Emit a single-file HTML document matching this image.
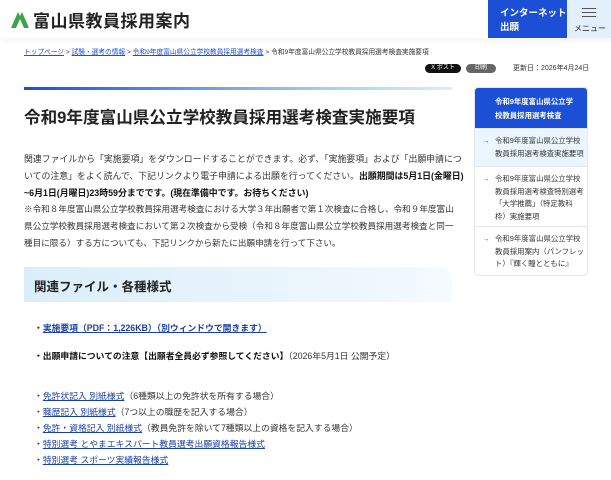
<!DOCTYPE html>
<html><head><meta charset="utf-8"><style>
*{margin:0;padding:0;box-sizing:border-box}
body{width:611px;height:480px;overflow:hidden;background:#fff;font-family:"Liberation Sans","Noto Sans CJK JP",sans-serif;color:#333;position:relative}
.a{position:absolute}
a{color:#1a3fa8}
.hdr{left:0;top:0;width:611px;height:38px;background:#fff;box-shadow:0 2px 6px rgba(0,0,0,.06)}
.bc{font-size:6.7px;top:46px;left:24px;color:#333;white-space:nowrap}
.bc a{color:#1a4fd6}
p{font-size:8.9px;line-height:17px;white-space:nowrap}
.side div{border-bottom:1px solid #e4e8ee;font-size:7.4px;line-height:12.5px;padding:6px 4px 0 20px;position:relative;white-space:nowrap}
.side div:before{content:"→";position:absolute;left:7px;top:6px;color:#1a4fd6}
.lk{font-size:8.8px;left:34px;white-space:nowrap}
.lk a{color:#1a3fa8}
</style></head><body>
<div class="a hdr"></div>
<svg class="a" style="left:10px;top:9px" width="20" height="20" viewBox="0 0 20 20"><path d="M1 19 L8 3 L10 7 L12 3 L19 19 Z" fill="#3aa44a"/><path d="M6 19 L10 10 L14 19Z" fill="#fff"/></svg>
<div class="a" style="left:33px;top:7px;font-size:17px;font-weight:bold;color:#222;letter-spacing:.5px">富山県教員採用案内</div>
<div class="a" style="left:488px;top:0;width:79px;height:38px;background:#1a4fd6;color:#fff;font-size:9.5px;font-weight:bold;padding:7px 0 0 12px;line-height:14px">インターネット<br>出願</div>
<div class="a" style="left:567px;top:0;width:44px;height:38px;background:#e3f0fb"></div>
<div class="a" style="left:582px;top:8px;width:14px;height:1px;background:#555;box-shadow:0 4px 0 #555,0 8px 0 #555"></div>
<div class="a" style="left:574px;top:23px;font-size:8px;color:#222">メニュー</div>
<div class="a bc"><a href="#">トップページ</a> &gt; <a href="#">試験・選考の情報</a> &gt; <a href="#">令和9年度富山県公立学校教員採用選考検査</a> &gt; 令和9年度富山県公立学校教員採用選考検査実施要項</div>
<div class="a" style="left:425px;top:64px;width:36px;height:9px;border-radius:5px;background:#111;color:#fff;font-size:6px;text-align:center;line-height:9px">X ポスト</div>
<div class="a" style="left:466px;top:64px;width:30px;height:9px;border-radius:5px;background:#666;color:#fff;font-size:6px;text-align:center;line-height:9px">印刷</div>
<div class="a" style="left:513px;top:63px;font-size:7px;color:#333">更新日：2026年4月24日</div>
<div class="a" style="left:24px;top:87px;width:428px;height:3px;background:linear-gradient(90deg,#1a4fd6,#9fd0f5 70%,#d9eefc)"></div>
<div class="a" style="left:24px;top:104px;font-size:16.6px;font-weight:bold;color:#222">令和9年度富山県公立学校教員採用選考検査実施要項</div>
<p class="a" style="left:24px;top:151px">関連ファイルから「実施要項」をダウンロードすることができます。必ず、「実施要項」および「出願申請につ<br>いての注意」をよく読んで、下記リンクより電子申請による出願を行ってください。<b style="color:#111">出願期間は5月1日(金曜日)<br>~6月1日(月曜日)23時59分までです。(現在準備中です。お待ちください)</b></p>
<p class="a" style="left:24px;top:201px;font-size:8.6px">※令和８年度富山県公立学校教員採用選考検査における大学３年出願者で第１次検査に合格し、令和９年度富山<br>県公立学校教員採用選考検査において第２次検査から受検（令和８年度富山県公立学校教員採用選考検査と同一<br>種目に限る）する方についても、下記リンクから新たに出願申請を行って下さい。</p>
<div class="a" style="left:24px;top:267px;width:428px;height:35px;border-radius:0 12px 0 0;background:linear-gradient(90deg,#daeefa,#eef7fd 80%,#f6fbfe)"></div>
<div class="a" style="left:34px;top:276px;font-size:12.5px;font-weight:bold;color:#222">関連ファイル・各種様式</div>
<div class="a lk" style="top:321px"><b>・<a href="#">実施要項（PDF：1,226KB）（別ウィンドウで開きます）</a></b></div>
<div class="a lk" style="top:349px"><b style="color:#111">・出願申請についての注意【出願者全員必ず参照してください】</b>（2026年5月1日 公開予定）</div>
<div class="a lk" style="top:389px">・<a href="#">免許状記入 別紙様式</a>（6種類以上の免許状を所有する場合）</div>
<div class="a lk" style="top:405px">・<a href="#">職歴記入 別紙様式</a>（7つ以上の職歴を記入する場合）</div>
<div class="a lk" style="top:421px">・<a href="#">免許・資格記入 別紙様式</a>（教員免許を除いて7種類以上の資格を記入する場合）</div>
<div class="a lk" style="top:437px">・<a href="#">特別選考 とやまエキスパート教員選考出願資格報告様式</a></div>
<div class="a lk" style="top:453px">・<a href="#">特別選考 スポーツ実績報告様式</a></div>
<div class="a side" style="left:474px;top:87px;width:114px;border:1px solid #e4e8ee;border-radius:4px;overflow:hidden">
<div style="background:#1a4fd6;color:#fff;font-weight:bold;height:41px;padding-top:7px;line-height:14px">令和9年度富山県公立学<br>校教員採用選考検査</div>
<div style="background:#eaf5fd;height:38px">令和9年度富山県公立学校<br>教員採用選考検査実施要項</div>
<div style="height:60px">令和9年度富山県公立学校<br>教員採用選考検査特別選考<br>「大学推薦」（特定教科<br>枠）実施要項</div>
<div style="height:48px;border-bottom:none">令和9年度富山県公立学校<br>教員採用案内（パンフレッ<br>ト）『輝く瞳とともに』</div>
</div>
</body></html>
